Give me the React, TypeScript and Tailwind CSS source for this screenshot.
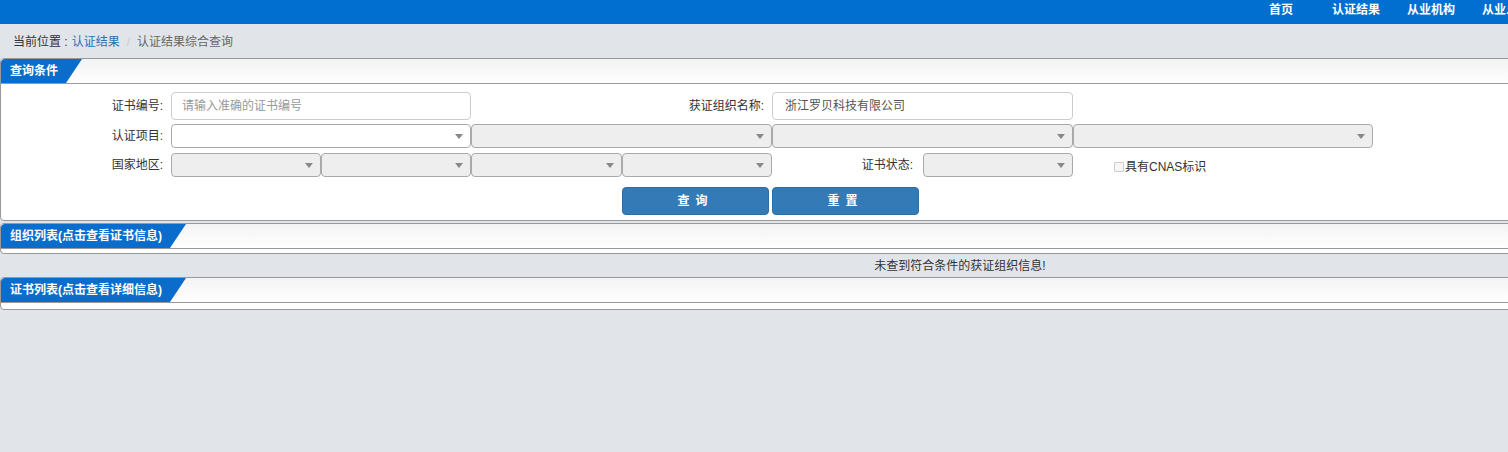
import React from 'react';

const font = { fontFamily: '"Liberation Sans", "Noto Sans CJK SC", sans-serif' };

const Select: React.FC<{ w: string; white?: boolean }> = ({ w, white }) => (
  <div
    className={`${w} h-[24px] relative border border-[#aaa] rounded-[4px] ${white ? 'bg-white' : 'bg-[#eee]'}`}
  >
    <span className="absolute right-[7px] top-[9px] w-0 h-0 border-l-[4px] border-r-[4px] border-t-[5px] border-l-transparent border-r-transparent border-t-[#888]" />
  </div>
);

const PanelHeader: React.FC<{ title: string }> = ({ title }) => (
  <div className="h-[25px] border-b border-[#999] bg-gradient-to-b from-[#f3f3f3] to-white flex">
    <div className="h-[24px] bg-[#0a6dcb] rounded-tl-[4px] pl-[9px] pr-[24px] flex items-center text-white text-[12px] font-bold [clip-path:polygon(0_0,100%_0,calc(100%-16px)_100%,0_100%)]">
      {title}
    </div>
  </div>
);

export default function App() {
  return (
    <div className="w-full h-[452px] overflow-hidden bg-[#e1e5e9]" style={font}>
      <div className="w-[1920px]">
        {/* top bar */}
        <div className="h-[24px] bg-[#006fcf] flex items-start pl-[1269px] text-white text-[12px] font-bold leading-[20px]">
          <span>首页</span>
          <span className="ml-[39px]">认证结果</span>
          <span className="ml-[27px]">从业机构</span>
          <span className="ml-[27px]">从业人员</span>
          <span className="ml-[27px]">统计分析</span>
        </div>

        {/* breadcrumb */}
        <div className="h-[34px] flex items-center pl-[13px] pt-[1px] text-[12px]">
          <span className="text-[#333]">当前位置 :</span>
          <span className="text-[#2f6fb0] ml-[4px]">认证结果</span>
          <span className="text-[#ccc] mx-[7px]">/</span>
          <span className="text-[#666]">认证结果综合查询</span>
        </div>

        {/* query panel */}
        <div className="border border-[#999] rounded-[4px] bg-white overflow-hidden">
          <PanelHeader title="查询条件" />
          <div className="pt-[8px] pb-[5px] text-[12px] text-[#333]">
            <div className="flex items-center h-[28px]">
              <div className="w-[162px] text-right">证书编号:</div>
              <input
                className="ml-[8px] w-[300px] h-[28px] border border-[#ccc] rounded-[4px] px-[10px] text-[12px] placeholder:text-[#999] outline-none"
                placeholder="请输入准确的证书编号"
              />
              <div className="w-[293px] text-right">获证组织名称:</div>
              <div className="ml-[8px] w-[301px] h-[28px] border border-[#ccc] rounded-[4px] px-[12px] flex items-center text-[#555]">
                浙江罗贝科技有限公司
              </div>
            </div>
            <div className="flex items-center mt-[4px]">
              <div className="w-[162px] text-right">认证项目:</div>
              <div className="ml-[8px] flex">
                <Select w="w-[300px]" white />
                <Select w="w-[301px]" />
                <Select w="w-[301px]" />
                <Select w="w-[300px]" />
              </div>
            </div>
            <div className="flex items-center mt-[5px]">
              <div className="w-[162px] text-right">国家地区:</div>
              <div className="ml-[8px] flex">
                <Select w="w-[150px]" />
                <Select w="w-[150px]" />
                <Select w="w-[151px]" />
                <Select w="w-[150px]" />
              </div>
              <div className="w-[141px] text-right">证书状态:</div>
              <div className="ml-[10px]">
                <Select w="w-[150px]" />
              </div>
              <label className="ml-[41px] mt-[4px] flex items-center">
                <span className="w-[10px] h-[10px] border border-[#ccc] bg-[#f7f7f7] rounded-[1px] mr-[1px]" />
                具有CNAS标识
              </label>
            </div>
            <div className="flex mt-[10px] pl-[621px] gap-[3px]">
              <button className="w-[147px] h-[28px] bg-[#337ab7] border border-[#2e6da4] rounded-[4px] text-white text-[12px] font-bold tracking-[6px]">
                查询
              </button>
              <button className="w-[147px] h-[28px] bg-[#337ab7] border border-[#2e6da4] rounded-[4px] text-white text-[12px] font-bold tracking-[6px]">
                重置
              </button>
            </div>
          </div>
        </div>

        {/* organization list */}
        <div className="mt-[2px] border border-[#999] rounded-[4px] bg-white overflow-hidden">
          <PanelHeader title="组织列表(点击查看证书信息)" />
          <div className="h-[4px]" />
        </div>
        <div className="h-[23px] flex items-center justify-center text-[12px] text-[#333]">
          未查到符合条件的获证组织信息!
        </div>

        {/* certificate list */}
        <div className="border border-[#999] rounded-[4px] bg-white overflow-hidden">
          <PanelHeader title="证书列表(点击查看详细信息)" />
          <div className="h-[6px]" />
        </div>
      </div>
    </div>
  );
}
